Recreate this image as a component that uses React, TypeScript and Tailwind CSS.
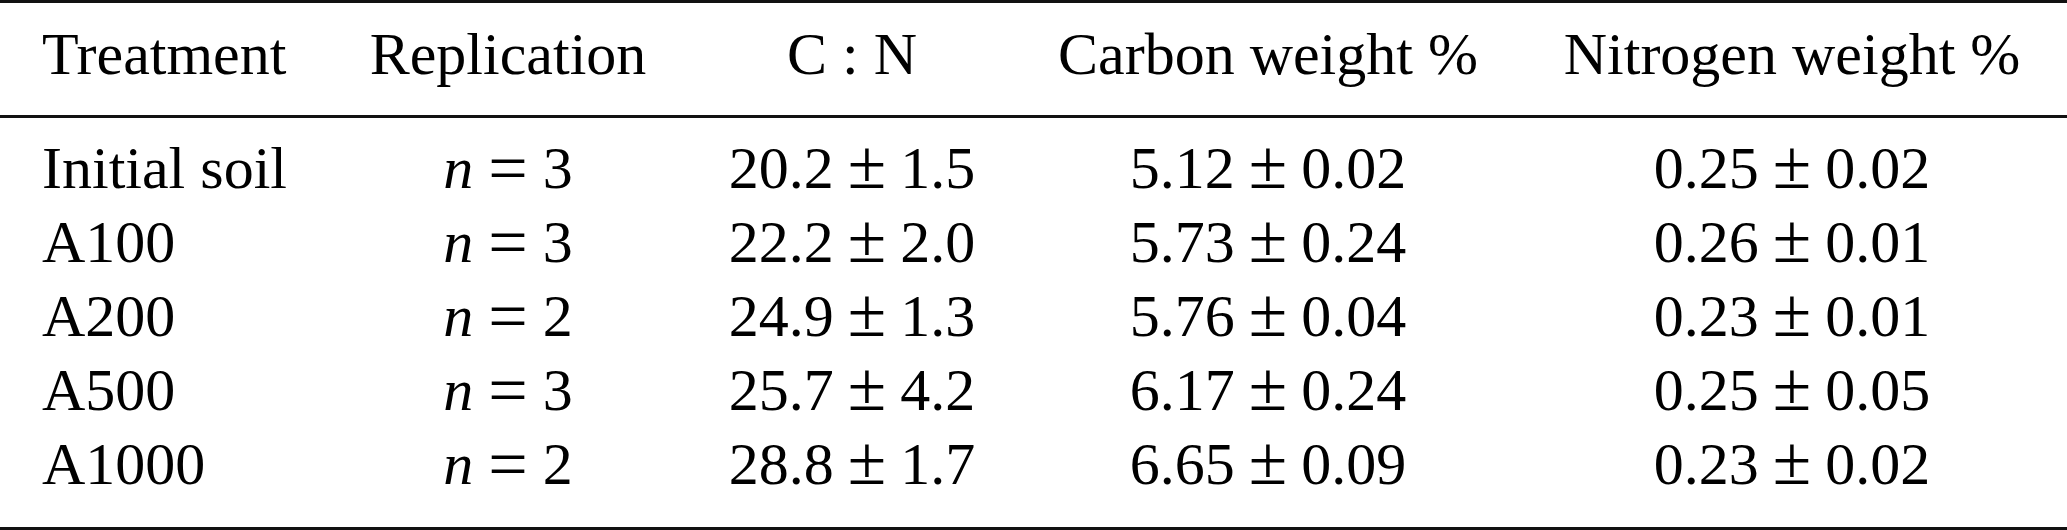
import React from 'react';

type Row = {
  treatment: string;
  n: number;
  cn: [string, string];
  carbon: [string, string];
  nitrogen: [string, string];
};

const rows: Row[] = [
  { treatment: 'Initial soil', n: 3, cn: ['20.2', '1.5'], carbon: ['5.12', '0.02'], nitrogen: ['0.25', '0.02'] },
  { treatment: 'A100', n: 3, cn: ['22.2', '2.0'], carbon: ['5.73', '0.24'], nitrogen: ['0.26', '0.01'] },
  { treatment: 'A200', n: 2, cn: ['24.9', '1.3'], carbon: ['5.76', '0.04'], nitrogen: ['0.23', '0.01'] },
  { treatment: 'A500', n: 3, cn: ['25.7', '4.2'], carbon: ['6.17', '0.24'], nitrogen: ['0.25', '0.05'] },
  { treatment: 'A1000', n: 2, cn: ['28.8', '1.7'], carbon: ['6.65', '0.09'], nitrogen: ['0.23', '0.02'] },
];

const cols = 'grid grid-cols-[331px_354px_334px_498px_550px]';

// value ± error, spaced like math mode
const PlusMinus = ({ v }: { v: [string, string] }) => (
  <span className="whitespace-nowrap">
    {v[0]}
    <span className="mx-[14px] text-[70px] leading-[0]">±</span>
    {v[1]}
  </span>
);

const App = () => {
  return (
    <div className="w-[2067px] h-[530px] bg-white text-black font-['Liberation_Serif',serif] text-[60px]">
      {/* Header */}
      <div className={`${cols} h-[115px] leading-[75px] border-t-[3px] border-[#111] pt-[14px]`}>
        <div className="pl-[42px] whitespace-nowrap">Treatment</div>
        <div className="text-center">Replication</div>
        <div className="text-center whitespace-nowrap">C : N</div>
        <div className="text-center whitespace-nowrap">Carbon weight %</div>
        <div className="text-center whitespace-nowrap">Nitrogen weight %</div>
      </div>

      {/* Body */}
      <div className="h-[415px] border-t-[3px] border-b-[3px] border-[#111] pt-[13px] leading-[74px]">
        {rows.map((row) => (
          <div key={row.treatment} className={`${cols} h-[74px]`}>
            <div className="pl-[42px] whitespace-nowrap">{row.treatment}</div>
            <div className="text-center whitespace-nowrap">
              <span className="italic">n</span>
              <span className="mx-[15px] text-[70px] leading-[0] align-[-4px]">=</span>
              {row.n}
            </div>
            <div className="text-center">
              <PlusMinus v={row.cn} />
            </div>
            <div className="text-center">
              <PlusMinus v={row.carbon} />
            </div>
            <div className="text-center">
              <PlusMinus v={row.nitrogen} />
            </div>
          </div>
        ))}
      </div>
    </div>
  );
};

export default App;
